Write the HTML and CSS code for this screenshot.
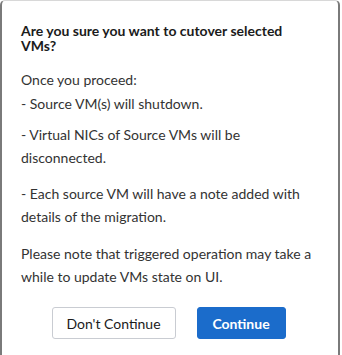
FILE: index.html
```html
<!DOCTYPE html>
<html lang="en">
  <head>
    <meta charset="UTF-8" />
    <meta name="viewport" content="width=device-width, initial-scale=1.0" />
    <title>Cutover VMs</title>
    <link rel="stylesheet" href="styles.css">
  </head>
  <body>
<div class="dialog">
  <h2 class="title">Are you sure you want to cutover selected VMs?</h2>

  <div class="content">
    <p class="intro">Once you proceed:</p>
    <p class="item">- Source VM(s) will shutdown.</p>
    <p class="item item-nics">- Virtual NICs of Source VMs will be disconnected.</p>
    <p class="item item-note">- Each source VM will have a note added with details of the migration.</p>
    <p class="notice">Please note that triggered operation may take a while to update VMs state on UI.</p>
  </div>

  <div class="actions">
    <button type="button" class="btn btn-secondary">Don't Continue</button>
    <button type="button" class="btn btn-primary">Continue</button>
  </div>
</div>
  </body>
</html>
```

FILE: styles.css
```css
* {
  margin: 0;
  padding: 0;
  box-sizing: border-box;
}

body {
  background-color: #fff;
  font-family: Lato, "Open Sans", Arial, sans-serif;
  width: 342px;
  height: 355px;
  overflow: hidden;
}

.dialog {
  width: 340px;
  height: 360px;
  background-color: #fff;
  border: 2px solid #7a7a7a;
  border-top: 1px solid #d8d8d8;
  border-radius: 5px 5px 0 0;
  padding: 22px 22px 20px 19px;
}

.title {
  font-size: 14px;
  font-weight: bold;
  line-height: 15px;
  color: #1b1b1b;
  margin-bottom: 15px;
}

.content {
  font-size: 14px;
  line-height: 23px;
  color: #333;
}

.intro {
  margin-bottom: 1px;
}

.item-nics {
  margin-top: 8px;
}

.item-note {
  margin-top: 13px;
}

.notice {
  margin-top: 14px;
}

.actions {
  display: flex;
  justify-content: center;
  gap: 21px;
  margin-top: 19px;
}

.btn {
  height: 32px;
  font-family: inherit;
  font-size: 14px;
  border-radius: 3px;
  cursor: pointer;
}

.btn-secondary {
  width: 124px;
  background-color: #fff;
  border: 1px solid #c9ccd2;
  color: #1b1b1b;
}

.btn-primary {
  width: 89px;
  background-color: #1b6ccb;
  border: 1px solid #1b6ccb;
  color: #fff;
  font-weight: bold;
}
```
